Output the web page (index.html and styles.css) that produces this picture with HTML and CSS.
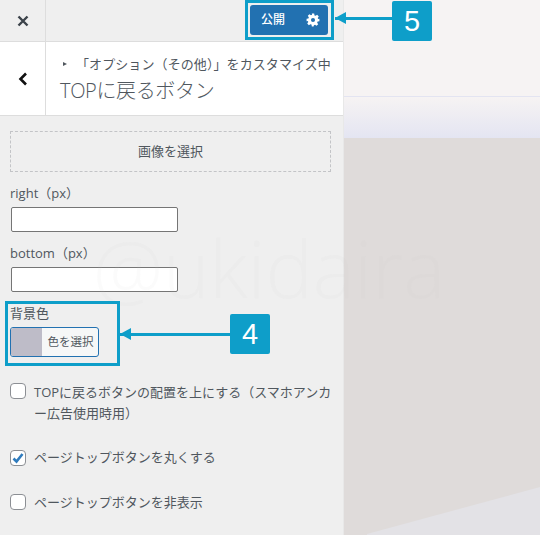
FILE: index.html
```html
<!DOCTYPE html>
<html lang="ja">
<head>
<meta charset="utf-8">
<title>TOPに戻るボタン</title>
<link rel="stylesheet" href="styles.css">
</head>
<body>
<div class="app">
  <aside class="panel">
    <header class="topbar">
      <button class="close" aria-label="閉じる">
        <svg width="12" height="12" viewBox="0 0 12 12"><path d="M1.5 1.5l9 9M10.5 1.5l-9 9" fill="none" stroke="#3c434a" stroke-width="2.4"/></svg>
      </button>
      <div class="publish">
        <span class="publish-label">公開</span>
        <span class="publish-gear">
          <svg width="14" height="14" viewBox="0 0 24 24"><path fill="#fff" fill-rule="evenodd" d="M10 1h4l.6 3.1 1.9.8 2.6-1.8 2.8 2.8-1.8 2.6.8 1.9L23 10v4l-3.1.6-.8 1.9 1.8 2.6-2.8 2.8-2.6-1.8-1.9.8L13 23h-3l-.6-3.1-1.9-.8-2.6 1.8-2.8-2.8 1.8-2.6-.8-1.9L1 14v-4l3.1-.6.8-1.9-1.8-2.6 2.8-2.8 2.6 1.8 1.9-.8zM12 8.500a3.500 3.500 0 1 0 0 7 3.500 3.500 0 0 0 0-7z"/></svg>
        </span>
      </div>
    </header>
    <section class="section-head">
      <button class="back" aria-label="戻る">
        <svg width="10" height="14" viewBox="0 0 10 14"><path d="M8 1.500L2.500 7 8 12.500" fill="none" stroke="#111" stroke-width="2.600"/></svg>
      </button>
      <div class="section-titles">
        <div class="crumb"><span class="crumb-mark"></span>「オプション（その他）」をカスタマイズ中</div>
        <h1 class="title">TOPに戻るボタン</h1>
      </div>
    </section>
    <main class="controls">
      <button class="image-select">画像を選択</button>
      <label class="field-label first">right（px）</label>
      <input class="num" type="text">
      <label class="field-label second">bottom（px）</label>
      <input class="num" type="text">
      <div class="color-label">背景色</div>
      <button class="color-btn"><span class="swatch"></span><span class="color-text">色を選択</span></button>
      <label class="check first-check"><span class="box"></span><span class="check-text">TOPに戻るボタンの配置を上にする（スマホアンカー広告使用時用）</span></label>
      <label class="check second-check"><span class="box">
        <svg width="14" height="14" viewBox="0 0 14 14"><path d="M2.500 7.500L5.500 10.500 11.500 3" fill="none" stroke="#2f7bbd" stroke-width="2.600"/></svg>
      </span><span class="check-text">ページトップボタンを丸くする</span></label>
      <label class="check third-check"><span class="box"></span><span class="check-text">ページトップボタンを非表示</span></label>
    </main>
  </aside>
  <div class="preview">
    <div class="preview-top"></div>
    <div class="preview-band"></div>
    <div class="preview-main">
      <svg class="preview-shape" width="197" height="48" viewBox="0 0 197 48" preserveAspectRatio="none"><polygon points="24,47 197,0 197,48 24,48" fill="#e3e2e6"/></svg>
    </div>
  </div>

  <div class="watermark">@ukidaira</div>

  <div class="hl hl-publish"></div>
  <div class="arrow arrow-5"></div>
  <div class="callout callout-5">5</div>

  <div class="hl hl-color"></div>
  <div class="arrow arrow-4"></div>
  <div class="callout callout-4">4</div>
</div>
</body>
</html>
```
FILE: styles.css
```css
* { box-sizing: border-box; }
html, body { margin: 0; padding: 0; }
body {
  width: 540px;
  height: 535px;
  overflow: hidden;
  font-family: "Open Sans", "Noto Sans CJK JP", sans-serif;
  font-size: 13px;
  color: #50575e;
  background: #dfdbda;
}
button { font-family: inherit; padding: 0; margin: 0; cursor: pointer; }

.app { position: relative; display: flex; width: 540px; height: 535px; overflow: hidden; }

.panel {
  width: 344px;
  height: 535px;
  flex: none;
  display: flex;
  flex-direction: column;
  background: #efefef;
  border-right: 1px solid #e8e8e8;
}

.topbar {
  height: 42px;
  flex: none;
  display: flex;
  align-items: flex-start;
  border-bottom: 1px solid #dddddd;
}
.close {
  width: 46px;
  height: 41px;
  display: flex;
  align-items: center;
  justify-content: center;
  border: 0;
  border-right: 1px solid #dddddd;
  background: transparent;
}
.publish {
  display: flex;
  width: 78px;
  height: 30px;
  margin: 5px 0 0 204px;
  background: #2271b1;
  border-radius: 3px;
  color: #fff;
  font-size: 12px;
  font-weight: 500;
}
.publish-label { width: 48px; padding-left: 11px; line-height: 30px; }
.publish-gear { flex: 1; display: flex; align-items: center; justify-content: center; }

.section-head {
  height: 74px;
  flex: none;
  display: flex;
  background: #fff;
  border-bottom: 1px solid #dddddd;
}
.back {
  width: 46px;
  height: 73px;
  display: flex;
  align-items: center;
  justify-content: center;
  border: 0;
  border-right: 1px solid #dddddd;
  background: #fff;
}
.section-titles { padding: 12px 0 0 14px; white-space: nowrap; }
.crumb { display: flex; align-items: center; font-size: 13px; line-height: 20px; color: #50575e; letter-spacing: 0.09px; }
.crumb-mark {
  width: 0;
  height: 0;
  margin: 0 9px 0 3px;
  border-left: 4px solid #50575e;
  border-top: 2.500px solid transparent;
  border-bottom: 2.500px solid transparent;
}
.title { margin: 3px 0 0 0; font-size: 20px; line-height: 28px; font-weight: 300; color: #50575e; letter-spacing: -0.35px; }

.controls { display: flex; flex-direction: column; align-items: flex-start; padding: 15px 0 0 10px; }
.image-select {
  width: 321px;
  height: 41px;
  padding-bottom: 2px;
  border: 1px dashed #c3c4c7;
  background: transparent;
  font-size: 13px;
  color: #50575e;
}
.field-label { display: block; font-size: 13px; line-height: 18px; }
.field-label.first { margin-top: 12px; }
.field-label.second { margin-top: 12px; }
.num {
  width: 167px;
  height: 25px;
  margin: 5px 0 0 1px;
  border: 1px solid #757575;
  border-radius: 2px;
  background: #fff;
}
.color-label { margin-top: 12px; font-size: 13px; line-height: 18px; }
.color-btn {
  display: flex;
  width: 89px;
  height: 30px;
  margin-top: 5px;
  border: 1px solid #2271b1;
  border-radius: 3px;
  background: #f6f7f7;
  overflow: hidden;
}
.swatch { width: 31px; height: 100%; background: #bebcc8; }
.color-text { flex: 1; font-size: 11.500px; line-height: 27px; color: #50575e; text-align: center; padding-left: 1px; }

.check { display: flex; align-items: flex-start; font-size: 13px; line-height: 21px; }
.box {
  width: 16px;
  height: 16px;
  flex: none;
  display: flex;
  align-items: center;
  justify-content: center;
  border: 1px solid #8c8f94;
  border-radius: 4px;
  background: #fff;
}
.check-text { margin-left: 8px; width: 300px; }
.first-check { margin-top: 25px; }
.first-check .box { margin-top: 1px; }
.second-check { margin-top: 23px; }
.second-check .box { margin-top: 3px; }
.third-check { margin-top: 24px; }
.third-check .box { margin-top: 2px; }

.preview { flex: 1; display: flex; flex-direction: column; }
.preview-top { height: 97px; flex: none; background: #f6f3f3; border-bottom: 1px solid #e3e4f1; }
.preview-band { height: 41px; flex: none; background: linear-gradient(#f6f3f3, #e4e5f2); }
.preview-main { flex: 1; background: #dfdbda; position: relative; }
.preview-shape { position: absolute; right: 0; bottom: 0; }

.watermark {
  position: absolute;
  left: 93px;
  top: 218px;
  font-family: "Open Sans", sans-serif;
  font-size: 79px;
  line-height: 100px;
  font-weight: 300;
  color: rgba(205, 205, 210, 0.08);
  white-space: nowrap;
  pointer-events: none;
}

.hl { position: absolute; border: 3px solid #0e9ec9; }
.hl-publish { left: 245px; top: 0; width: 89px; height: 40px; }
.hl-color { left: 5px; top: 301px; width: 115px; height: 65px; }

.arrow { position: absolute; height: 3px; background: #0e9ec9; }
.arrow::before {
  content: "";
  position: absolute;
  left: 0;
  top: -5px;
  border-right: 11px solid #0e9ec9;
  border-top: 6.500px solid transparent;
  border-bottom: 6.500px solid transparent;
}
.arrow-5 { left: 335px; top: 17px; width: 58px; }
.arrow-4 { left: 120px; top: 333px; width: 111px; }

.callout {
  position: absolute;
  width: 40px;
  height: 40px;
  background: #0e9ec9;
  border-radius: 2px;
  color: #fff;
  font-family: "Liberation Sans", sans-serif;
  font-size: 29px;
  line-height: 40px;
  text-align: center;
}
.callout-5 { left: 392px; top: 1px; }
.callout-4 { left: 230px; top: 314px; }
```
